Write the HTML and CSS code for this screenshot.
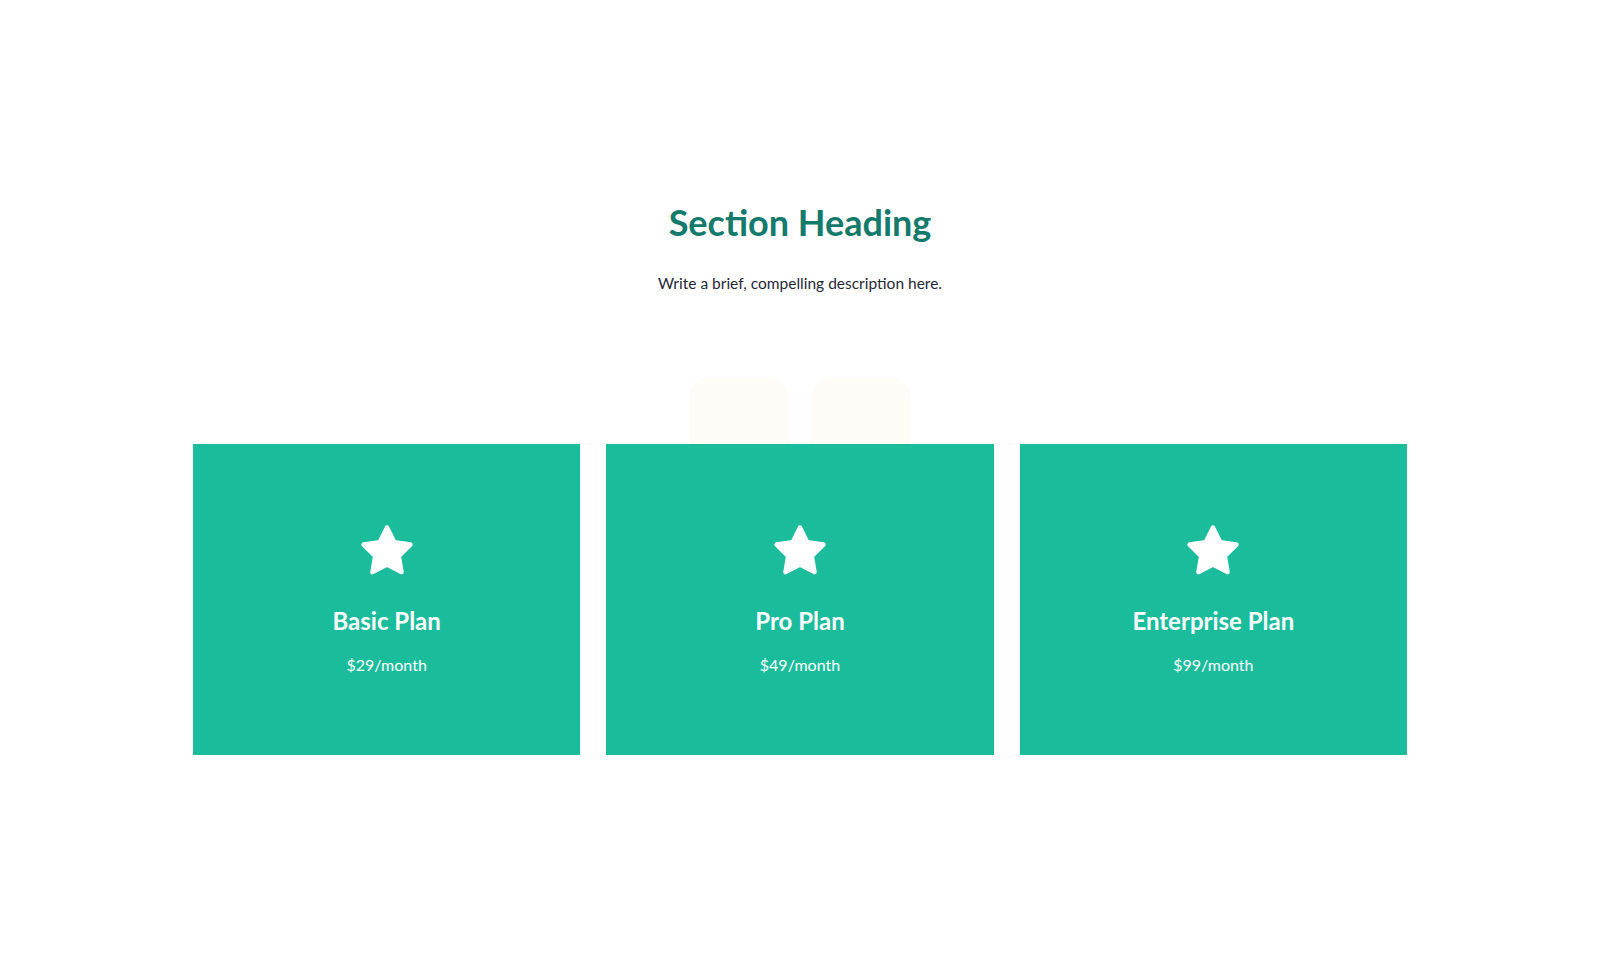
FILE: index.html
```html
<!DOCTYPE html>
<html lang="en">
<head>
<meta charset="utf-8">
<title>Section</title>
<link rel="stylesheet" href="styles.css">
</head>
<body>
<section class="section">
  <header class="section-head">
    <h2 class="section-title">Section Heading</h2>
    <p class="section-desc">Write a brief, compelling description here.</p>
  </header>
  <div class="stage">
    <div class="ghosts" aria-hidden="true">
      <span class="ghost"></span>
      <span class="ghost"></span>
    </div>
    <div class="cards">
      <article class="card">
        <svg class="card-icon" viewBox="0 0 24 24" aria-hidden="true"><polygon points="12 2 15.09 8.26 22 9.27 17 14.14 18.18 21.02 12 17.77 5.82 21.02 7 14.14 2 9.27 8.91 8.26 12 2"/></svg>
        <h3 class="card-title">Basic Plan</h3>
        <p class="card-price">$29/month</p>
      </article>
      <article class="card">
        <svg class="card-icon" viewBox="0 0 24 24" aria-hidden="true"><polygon points="12 2 15.09 8.26 22 9.27 17 14.14 18.18 21.02 12 17.77 5.82 21.02 7 14.14 2 9.27 8.91 8.26 12 2"/></svg>
        <h3 class="card-title">Pro Plan</h3>
        <p class="card-price">$49/month</p>
      </article>
      <article class="card">
        <svg class="card-icon" viewBox="0 0 24 24" aria-hidden="true"><polygon points="12 2 15.09 8.26 22 9.27 17 14.14 18.18 21.02 12 17.77 5.82 21.02 7 14.14 2 9.27 8.91 8.26 12 2"/></svg>
        <h3 class="card-title">Enterprise Plan</h3>
        <p class="card-price">$99/month</p>
      </article>
    </div>
  </div>
</section>
</body>
</html>
```

FILE: styles.css
```css
* { box-sizing: border-box; }
html, body { margin: 0; padding: 0; background: #ffffff; }
body {
  font-family: "Lato", "Inter", "Noto Sans", sans-serif;
  color: #1f2937;
}
.section {
  padding-top: 200px;
}
.section-head {
  text-align: center;
}
.section-title {
  margin: 0;
  font-size: 36px;
  line-height: 44px;
  font-weight: 700;
  color: #137a6c;
}
.section-desc {
  margin: 27px 0 0;
  font-size: 15.5px;
  line-height: 24px;
  color: #1f2937;
}
.stage {
  position: relative;
  width: 1214px;
  margin: 149px auto 0;
}
.ghosts {
  position: absolute;
  top: -66px;
  left: 0;
  right: 0;
  display: flex;
  justify-content: center;
  gap: 22px;
}
.ghost {
  width: 100px;
  height: 100px;
  border-radius: 20px;
  background: #fdfcf7;
}
.cards {
  position: relative;
  display: grid;
  grid-template-columns: repeat(3, 1fr);
  gap: 26px;
}
.card {
  height: 311px;
  background: #1abc9c;
  color: #ffffff;
  display: flex;
  flex-direction: column;
  align-items: center;
  padding-top: 79px;
  text-align: center;
}
.card-icon {
  width: 56px;
  height: 56px;
  fill: #ffffff;
  stroke: #ffffff;
  stroke-width: 2;
  stroke-linejoin: round;
  stroke-linecap: round;
}
.card-title {
  margin: 26px 0 0;
  font-size: 24px;
  line-height: 32px;
  font-weight: 700;
}
.card-price {
  margin: 16px 0 0;
  font-size: 16px;
  line-height: 24px;
}
```
